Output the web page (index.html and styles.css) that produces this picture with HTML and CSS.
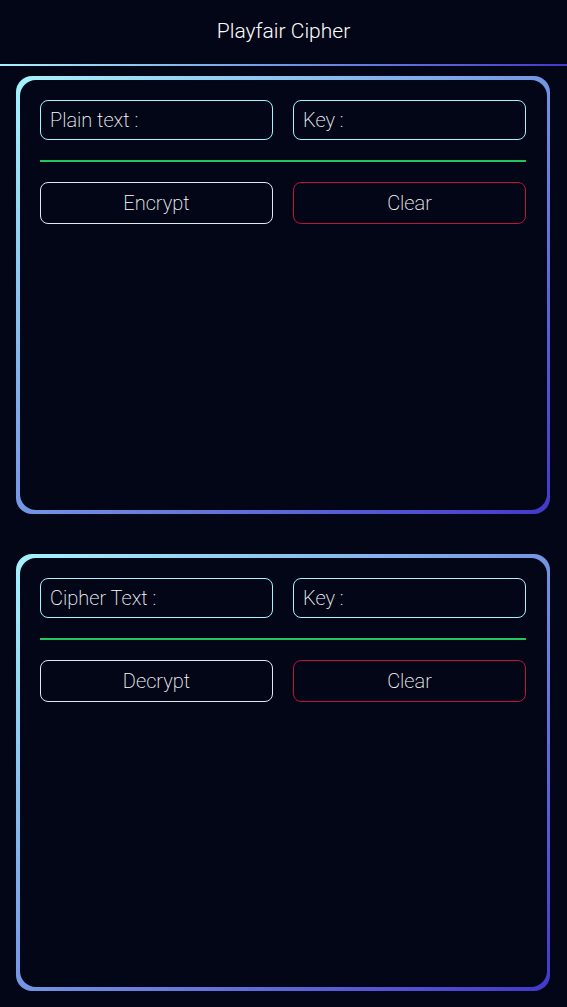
FILE: index.html
```html
<!DOCTYPE html>
<html lang="en">
<head>
<meta charset="utf-8">
<meta name="viewport" content="width=device-width, initial-scale=1">
<title>Playfair Cipher</title>
<link rel="stylesheet" href="styles.css">
</head>
<body>
<header class="header"><h1 class="title">Playfair Cipher</h1></header>
<main class="panels">
  <section class="card">
    <form class="card-body">
      <input class="field" type="text" aria-label="Plain text" placeholder="Plain text :">
      <input class="field" type="text" aria-label="Key" placeholder="Key :">
      <hr class="divider">
      <button class="btn" type="button">Encrypt</button>
      <button class="btn btn-clear" type="reset">Clear</button>
    </form>
  </section>
  <section class="card">
    <form class="card-body">
      <input class="field" type="text" aria-label="Cipher Text" placeholder="Cipher Text :">
      <input class="field" type="text" aria-label="Key" placeholder="Key :">
      <hr class="divider">
      <button class="btn" type="button">Decrypt</button>
      <button class="btn btn-clear" type="reset">Clear</button>
    </form>
  </section>
</main>
</body>
</html>
```

FILE: styles.css
```css
* {
  box-sizing: border-box;
}

body {
  margin: 0;
  min-height: 100vh;
  display: flex;
  flex-direction: column;
  background: #020617;
  color: #fff;
  font-family: Roboto, sans-serif;
  font-size: 20px;
  font-weight: 200;
}

.header {
  padding: 16px 0 18px;
  border-bottom: 2px solid;
  border-image: linear-gradient(to right, #a5f3fc, #4338ca) 1;
  text-align: center;
}

.title {
  margin: 0;
  font-size: 21px;
  font-weight: 300;
  line-height: 30px;
}

.panels {
  flex: 1;
  display: grid;
  grid-auto-rows: 1fr;
  gap: 40px;
  padding: 10px 17px 16px 16px;
}

.card {
  display: flex;
  padding: 4px 3px 4px 4px;
  border-radius: 16px;
  background: linear-gradient(to bottom right, #a5f3fc, #4338ca);
}

.card-body {
  flex: 1;
  display: grid;
  grid-template-columns: 1fr 1fr;
  align-content: start;
  gap: 20px;
  padding: 20px 21px 20px 20px;
  border-radius: 16px;
  background: #020617;
}

.field,
.btn {
  width: 100%;
  min-width: 0;
  border-radius: 8px;
  background: transparent;
  color: #fff;
  font: inherit;
}

.field {
  height: 40px;
  padding: 0 9px;
  border: 1px solid #a5f3fc;
}

.field::placeholder {
  color: #fff;
  opacity: 1;
}

.divider {
  grid-column: 1 / -1;
  width: 100%;
  height: 2px;
  margin: 0;
  border: 0;
  background: #22c55e;
}

.btn {
  height: 42px;
  padding: 0;
  border: 1px solid #e2e8f0;
  cursor: pointer;
}

.btn-clear {
  border-color: #be123c;
}
```
